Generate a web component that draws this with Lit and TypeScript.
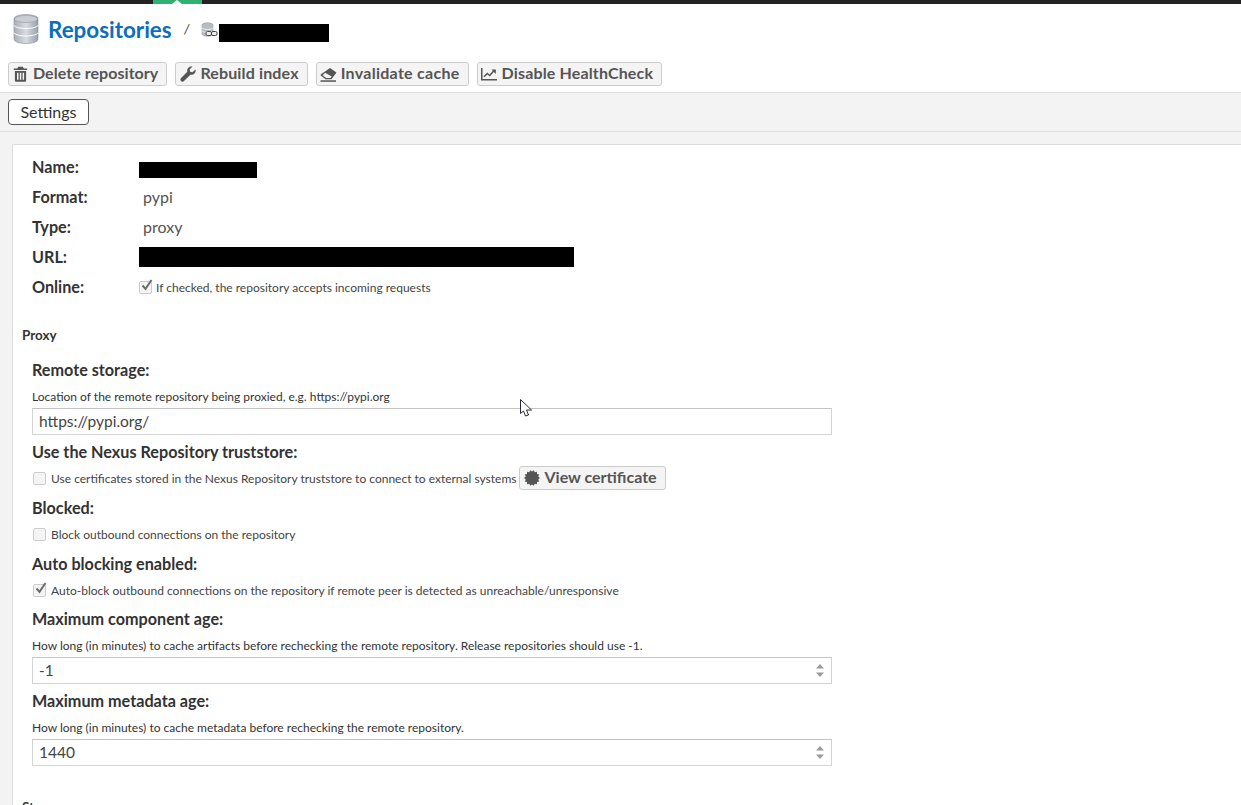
import { LitElement, html, css, svg } from "lit";
import { customElement } from "lit/decorators.js";

const gearPath = (() => {
  const pts: string[] = [];
  const n = 14;
  for (let i = 0; i < n * 2; i++) {
    const r = i % 2 === 0 ? 8 : 6.4;
    const a = (Math.PI * i) / n;
    pts.push(`${(8 + r * Math.cos(a)).toFixed(2)},${(8 + r * Math.sin(a)).toFixed(2)}`);
  }
  return pts.join(" ");
})();

const trash = svg`<svg width="15" height="16" viewBox="0 0 15 16"><path fill="#555" fill-rule="evenodd" d="M5.200 0.800h4.600l1 1.700H14.200v1.600H0.800V2.500H4.200zM1.900 5h11.200v9.400c0 .9-.6 1.400-1.400 1.400H3.300c-.8 0-1.400-.5-1.400-1.400zM4 6.800v7h1.500v-7zM6.800 6.800v7h1.500v-7zM9.600 6.800v7h1.500v-7z"/></svg>`;
const wrench = svg`<svg width="16" height="16" viewBox="0 0 16 16"><path fill="#555" d="M15.600 3.600c.3 1.600-.2 3-1.200 4-1 1-2.600 1.500-4 1.100L4 15c-.9.900-2.200.9-3 .1-.9-.9-.8-2.100.1-3l6.200-6.300c-.4-1.500.1-3 1.100-4C9.500.700 11 .200 12.500.600L9.600 3.500l.5 2.300 2.300.5z"/></svg>`;
const eraser = svg`<svg width="17" height="15" viewBox="0 0 17 15"><path fill="#555" fill-rule="evenodd" d="M10 1l6.500 4.500-5 6.800H5.500L.8 8.500c-.4-.3-.4-.7-.1-1.100zM5.200 5.800L2.600 8.300l3.500 2.600h4.400l1.200-1.500z"/><rect x="0.500" y="13.300" width="15.500" height="1.500" fill="#555"/></svg>`;
const chart = svg`<svg width="16" height="14" viewBox="0 0 16 14"><path fill="#555" d="M0 1h1.500v11H16v1.500H0z"/><path fill="none" stroke="#555" stroke-width="1.500" d="M3 9.800l3.300-3.300 2.400 2 4-4.500"/><path fill="#555" d="M10.500 2.600h4.300v4.300z"/></svg>`;
const cert = svg`<svg width="16" height="16" viewBox="0 0 16 16"><polygon fill="#555" points=${gearPath}/></svg>`;
const spin = svg`<svg width="8" height="13" viewBox="0 0 8 13"><path fill="#9a9a9a" d="M4 0l4 4.500H0zM0 8.500h8L4 13z"/></svg>`;
const check = svg`<svg class="tick" width="13" height="13" viewBox="0 0 13 13"><path fill="none" stroke="#6b6b6b" stroke-width="2" d="M2.500 6.500l3 3.300L11.500 1"/></svg>`;

@customElement("app-root")
export class AppRoot extends LitElement {
  static styles = css`
    :host {
      display: block;
      position: relative;
      width: 1241px;
      height: 805px;
      overflow: hidden;
      background: #f3f3f3;
      font-family: Lato, "Open Sans", sans-serif;
      color: #333;
    }
    .topbar {
      height: 4px;
      background: #222;
      position: relative;
    }
    .topmark {
      position: absolute;
      left: 153px;
      top: 0;
      width: 49px;
      height: 4px;
      background: #2fb170;
    }
    .notch {
      position: absolute;
      left: 172px;
      top: 0;
      border-left: 5px solid transparent;
      border-right: 5px solid transparent;
      border-bottom: 4px solid #fff;
    }
    .head {
      background: #fff;
      height: 89px;
      box-sizing: border-box;
      border-bottom: 1px solid #ddd;
      padding: 0 8px;
    }
    .crumbs {
      display: flex;
      align-items: center;
      height: 50px;
      padding-left: 5px;
    }
    .title {
      font-size: 22.400px;
      font-weight: 700;
      color: #0a6ebd;
      margin-left: 9px;
      width: 136px;
      white-space: nowrap;
    }
    .sep {
      font-size: 13px;
      font-style: italic;
      width: 17px;
    }
    .black {
      background: #000;
      flex: none;
    }
    .crumbblack {
      width: 110px;
      height: 18px;
      margin: 8px 0 0 1px;
    }
    .smallicon {
      margin-top: 3px;
    }
    .tools {
      display: flex;
      gap: 8px;
      padding-top: 8px;
    }
    .btn {
      display: inline-flex;
      align-items: center;
      gap: 4px;
      box-sizing: border-box;
      height: 24px;
      padding: 0 8px 3px 3px;
      border: 1px solid #ccc;
      border-radius: 3px;
      background: #f4f4f4;
      font-size: 16px;
      letter-spacing: 0.150px;
      font-weight: 700;
      color: #555;
      white-space: nowrap;
    }
    .btn.del {
      letter-spacing: 0.050px;
    }
    .btn.inv {
      letter-spacing: 0.280px;
    }
    .slot {
      display: flex;
      align-items: center;
      justify-content: center;
      flex: none;
      width: 17px;
      margin-bottom: -3px;
    }
    .tabs {
      height: 39px;
      box-sizing: border-box;
      border-bottom: 1px solid #ddd;
      padding: 6px 8px 0;
    }
    .tab {
      display: inline-flex;
      align-items: center;
      justify-content: center;
      box-sizing: border-box;
      width: 81px;
      height: 26px;
      padding-bottom: 1px;
      border: 1px solid #555;
      border-radius: 4px;
      background: #fff;
      font-size: 16px;
      color: #333;
    }
    .panel {
      margin: 12px 0 0 12px;
      background: #fff;
      border: 1px solid #ddd;
      border-right: 0;
      height: 700px;
      padding: 7px 0 0 19px;
      box-sizing: border-box;
    }
    .row {
      display: flex;
      align-items: center;
      height: 30px;
    }
    .key {
      width: 107px;
      flex: none;
      padding-bottom: 2px;
      font-size: 16.200px;
      font-weight: 700;
      color: #333;
    }
    .val {
      font-size: 16px;
      color: #555;
      padding: 0 0 2px 4px;
    }
    .name-box {
      width: 118px;
      height: 16px;
      margin-top: 5px;
    }
    .url-box {
      width: 435px;
      height: 20px;
    }
    .section {
      margin: 24px 0 0 -10px;
      font-size: 13.500px;
      font-weight: 700;
      line-height: 18px;
      height: 18px;
      color: #333;
    }
    .section.next {
      margin-top: 32px;
    }
    .label {
      font-size: 16.200px;
      font-weight: 700;
      line-height: 20px;
      color: #333;
    }
    .proxy-first {
      margin-top: 16px;
    }
    .help {
      font-size: 12px;
      line-height: 14px;
      color: #333;
      margin-top: 10px;
    }
    .input {
      display: flex;
      align-items: center;
      justify-content: space-between;
      box-sizing: border-box;
      width: 800px;
      height: 27px;
      margin-top: 4px;
      padding: 0 7px 1px 6px;
      border: 1px solid #d4d4d4;
      border-top-color: #c4c4c4;
      font-size: 15.500px;
      color: #444;
      background: #fff;
    }
    .check-row {
      display: flex;
      align-items: center;
      height: 24px;
      margin-top: 4px;
      font-size: 12px;
      color: #444;
      white-space: nowrap;
    }
    .box {
      position: relative;
      flex: none;
      box-sizing: border-box;
      width: 13px;
      height: 13px;
      margin: 0 5px 0 1px;
      border: 1px solid #ccc;
      border-radius: 2px;
      background: #f4f4f4;
    }
    .tick {
      position: absolute;
      left: 0;
      top: -3px;
    }
    .online-box {
      margin: 0 4px 0 0;
    }
    .online-row {
      display: flex;
      align-items: center;
      font-size: 12px;
      color: #444;
      white-space: nowrap;
    }
    .cert {
      margin-left: 3px;
      letter-spacing: 0;
    }
    .gap-s {
      margin-top: 8px;
    }
    .gap-t {
      margin-top: 7px;
    }
    .gap-m {
      margin-top: 7px;
    }
    .cursor {
      position: absolute;
      left: 520px;
      top: 399px;
    }
  `;

  render() {
    return html`
      <div class="topbar"><div class="topmark"></div><div class="notch"></div></div>
      <div class="head">
        <div class="crumbs">
          <svg width="26" height="30" viewBox="0 0 26 30">
            <defs>
              <linearGradient id="g" x1="0" x2="1" y1="0" y2="0">
                <stop offset="0" stop-color="#a9afb8" />
                <stop offset="0.500" stop-color="#d8dce2" />
                <stop offset="1" stop-color="#98a0aa" />
              </linearGradient>
            </defs>
            <path fill="url(#g)" stroke="#8a8f96" stroke-width="0.600" d="M1 5c0-6 24-6 24 0v20c0 6-24 6-24 0z" />
            <path fill="none" stroke="#fff" d="M1 11.500c3 4 21 4 24 0M1 19c3 4 21 4 24 0" />
            <ellipse cx="13" cy="5" rx="11.500" ry="3.500" fill="#c9ced5" stroke="#8a8f96" stroke-width="0.500" />
          </svg>
          <span class="title">Repositories</span>
          <span class="sep">/</span>
          <svg class="smallicon" width="17" height="17" viewBox="0 0 17 17">
            <path fill="#b8bdc4" stroke="#8a8f96" stroke-width="0.500" d="M1 3c0-3 11-3 11 0v9c0 3-11 3-11 0z" />
            <path fill="none" stroke="#fff" stroke-width="0.700" d="M1 6c2 2 9 2 11 0M1 9c2 2 9 2 11 0" />
            <rect x="5" y="9.500" width="5.500" height="4" rx="1.500" fill="#eee" stroke="#444" />
            <rect x="10.500" y="9.500" width="5.500" height="4" rx="1.500" fill="#eee" stroke="#444" />
          </svg>
          <div class="black crumbblack"></div>
        </div>
        <div class="tools">
          <span class="btn del"><span class="slot">${trash}</span>Delete repository</span>
          <span class="btn"><span class="slot">${wrench}</span>Rebuild index</span>
          <span class="btn inv"><span class="slot">${eraser}</span>Invalidate cache</span>
          <span class="btn"><span class="slot">${chart}</span>Disable HealthCheck</span>
        </div>
      </div>
      <div class="tabs"><span class="tab">Settings</span></div>
      <div class="panel">
        <div class="row"><span class="key">Name:</span><div class="black name-box"></div></div>
        <div class="row"><span class="key">Format:</span><span class="val">pypi</span></div>
        <div class="row"><span class="key">Type:</span><span class="val">proxy</span></div>
        <div class="row"><span class="key">URL:</span><div class="black url-box"></div></div>
        <div class="row">
          <span class="key">Online:</span>
          <span class="online-row"><span class="box online-box">${check}</span>If checked, the repository accepts incoming requests</span>
        </div>
        <div class="section">Proxy</div>
        <div class="label proxy-first">Remote storage:</div>
        <div class="help">Location of the remote repository being proxied, e.g. https://pypi.org</div>
        <div class="input">https://pypi.org/</div>
        <div class="label gap-m">Use the Nexus Repository truststore:</div>
        <div class="check-row">
          <span class="box"></span>Use certificates stored in the Nexus Repository truststore to connect to external systems
          <span class="btn cert"><span class="slot">${cert}</span>View certificate</span>
        </div>
        <div class="label gap-s">Blocked:</div>
        <div class="check-row"><span class="box"></span>Block outbound connections on the repository</div>
        <div class="label gap-s">Auto blocking enabled:</div>
        <div class="check-row"><span class="box">${check}</span>Auto-block outbound connections on the repository if remote peer is detected as unreachable/unresponsive</div>
        <div class="label gap-t">Maximum component age:</div>
        <div class="help">How long (in minutes) to cache artifacts before rechecking the remote repository. Release repositories should use -1.</div>
        <div class="input">-1 ${spin}</div>
        <div class="label gap-m">Maximum metadata age:</div>
        <div class="help">How long (in minutes) to cache metadata before rechecking the remote repository.</div>
        <div class="input">1440 ${spin}</div>
        <div class="section next">Storage</div>
      </div>
      <svg class="cursor" width="13" height="20" viewBox="0 0 13 20">
        <path fill="#fff" stroke="#2a2a3a" d="M.5.500v14l3-2.500 2 5 3-1-2-5h5z" />
      </svg>
    `;
  }
}
